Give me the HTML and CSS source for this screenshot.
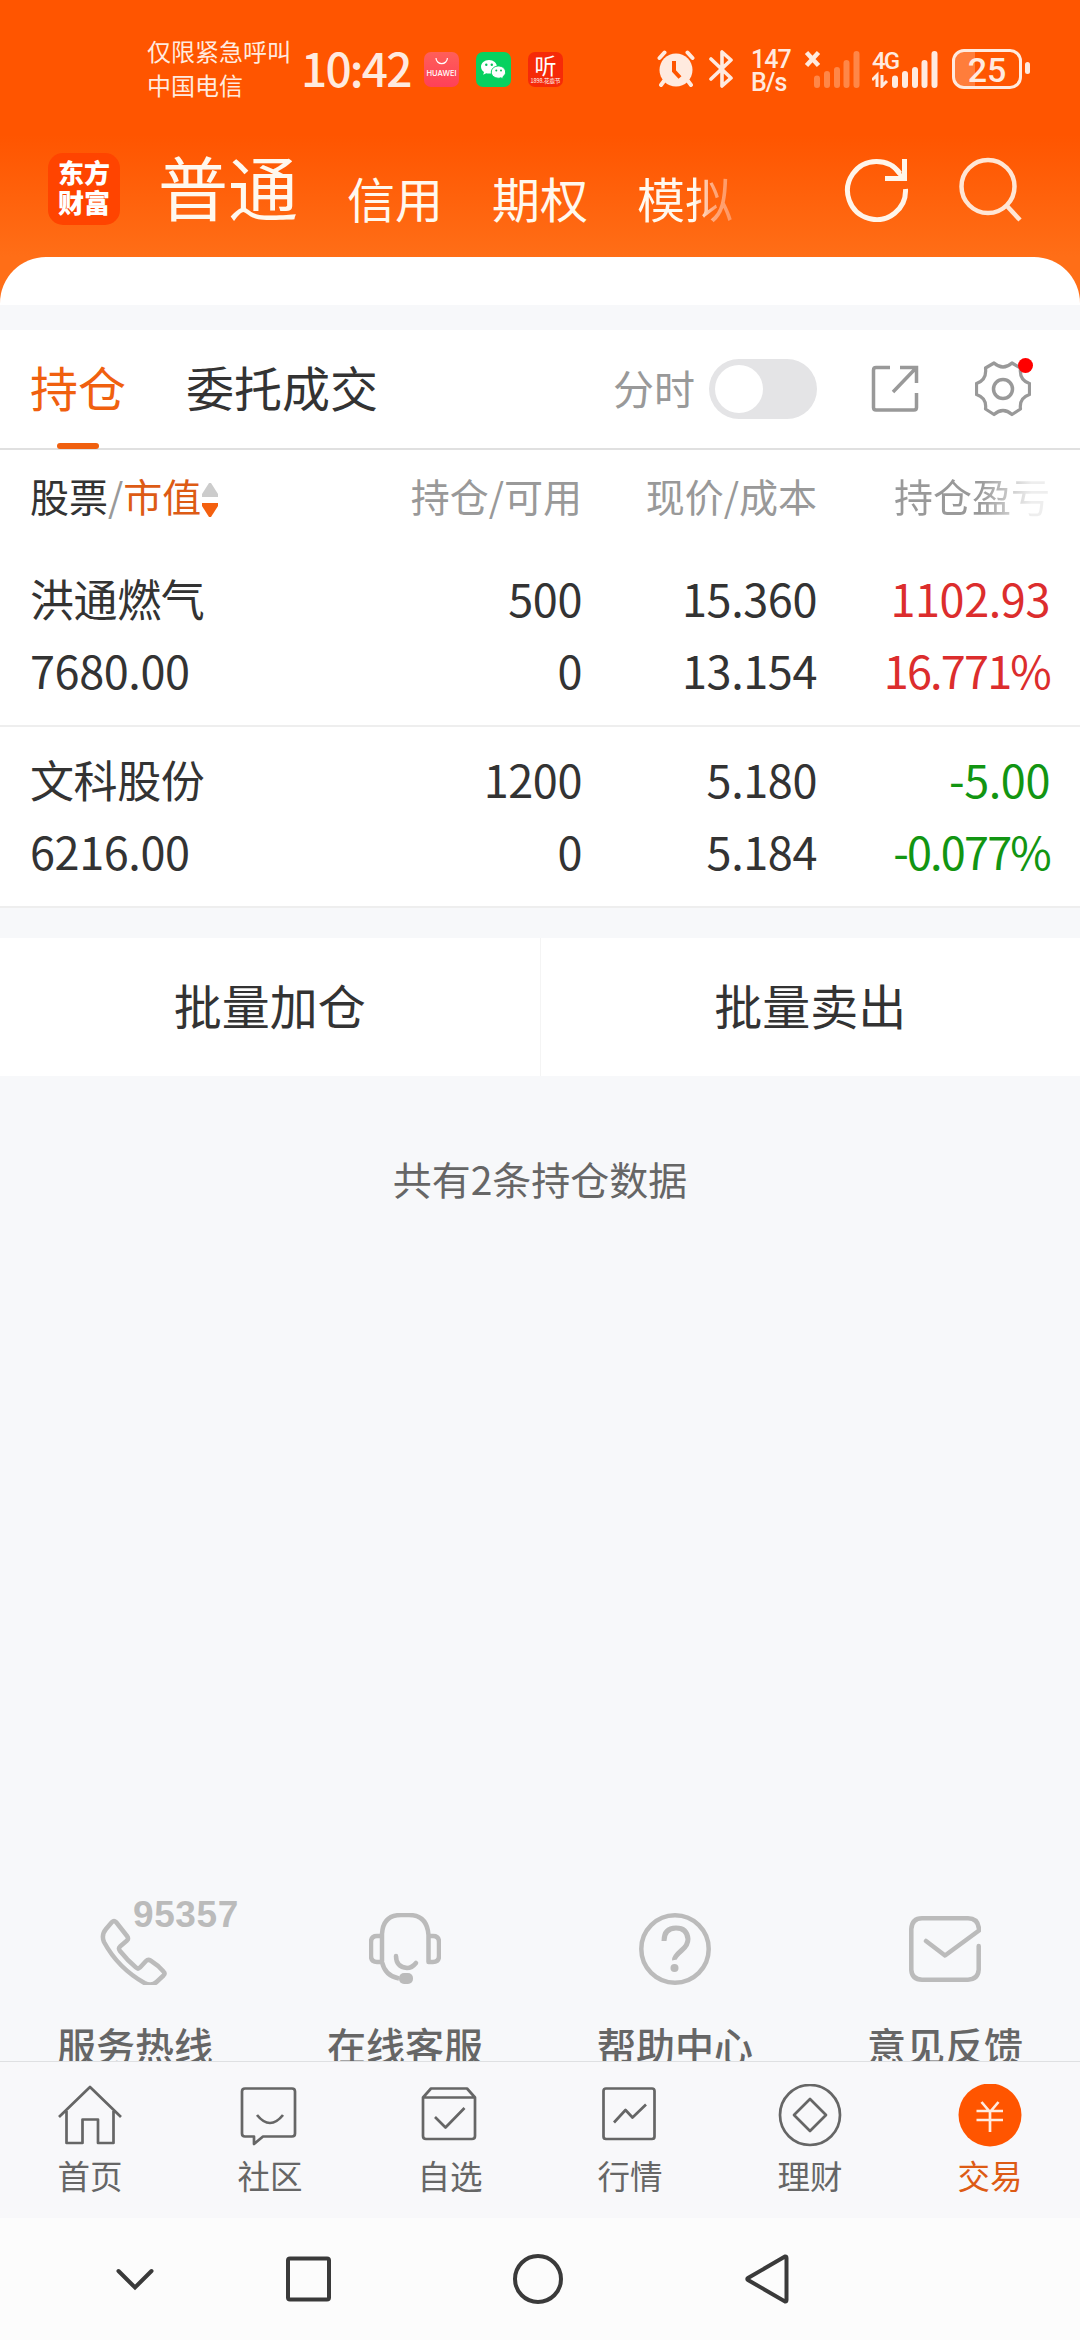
FILE: index.html
```
<!DOCTYPE html>
<html lang="zh-CN">

<head>
    <meta charset="UTF-8">
    <title>交易 - 持仓</title>
    <link rel="stylesheet" href="styles.css">
</head>

<body>
    <div class="header">
        <div class="status">
            <div class="carrier">
                <div>仅限紧急呼叫</div>
                <div>中国电信</div>
            </div>
            <div class="time">10:42</div>
            <div class="app huawei">
                <svg width="35" height="17" viewBox="0 0 35 17"><path d="M12 6a5.700 5.700 0 0 0 11.400 0" fill="none" stroke="#fff" stroke-width="1.200"/></svg>
                <span>HUAWEI</span>
            </div>
            <div class="app wechat">
                <svg width="35" height="35" viewBox="0 0 35 35">
                    <path d="M13 8c-4.600 0-8 3-8 6.800 0 2.200 1.200 4 3 5.300l-.8 2.600 3-1.500c.9.300 1.800.4 2.800.4 4.400 0 8-3 8-6.800S17.500 8 13 8z" fill="#fff"/>
                    <path d="M22.500 14c-4 0-7.200 2.700-7.200 6.100s3.200 6.100 7.200 6.100c.8 0 1.600-.1 2.400-.4l2.600 1.400-.7-2.300c1.700-1.100 2.800-2.800 2.800-4.800 0-3.400-3.200-6.100-7.100-6.100z" fill="#fff" stroke="#07d160" stroke-width="1"/>
                    <g fill="#07c15a"><circle cx="10.300" cy="12.800" r="1.200"/><circle cx="15.800" cy="12.800" r="1.200"/><circle cx="20.300" cy="18.500" r="1"/><circle cx="25" cy="18.500" r="1"/></g>
                </svg>
            </div>
            <div class="app radio"><b>听</b><span>1898.花鹿节</span></div>
            <svg class="alarm" width="38" height="38" viewBox="0 0 38 38">
                <circle cx="19" cy="20" r="16.500" fill="#ffeadf"/>
                <path d="M2.500 8l5-5.500M35.500 8l-5-5.500M7 31l-3 4M31 31l3 4" stroke="#ffeadf" stroke-width="4" stroke-linecap="round"/>
                <path d="M17 11v10l6 6.500" fill="none" stroke="#ff5500" stroke-width="4"/>
            </svg>
            <svg class="bt" width="24" height="38" viewBox="0 0 24 38"><path d="M2 9l20 19-9 8V22M2 29L22 10l-9-8v14" fill="none" stroke="#ffeadf" stroke-width="3.600" stroke-linejoin="round" stroke-linecap="round"/></svg>
            <div class="speed">
                <div>147</div>
                <div>B/s</div>
            </div>
            <svg class="signal" width="56" height="38" viewBox="0 0 56 38">
                <path d="M2.500 2.500l12 13M14.500 2.500l-12 13" stroke="#ffeadf" stroke-width="4.500"/>
                <path d="M13 28.500v6.500M23 24v11M33 20v15M42.500 13v22M52.500 4v31" stroke="#ff8748" stroke-width="6" stroke-linecap="round"/>
            </svg>
            <div class="mobile">
                <span>4G</span>
                <svg width="68" height="38" viewBox="0 0 68 38">
                    <path d="M0 30l5-5v12M10 25v11l5-5" fill="none" stroke="#ffeadf" stroke-width="3"/>
                    <path d="M23 28.500v6.500M33 24v11M43 20v15M52.500 13v22M62.500 4v31" stroke="#ffeadf" stroke-width="6" stroke-linecap="round"/>
                </svg>
            </div>
            <div class="battery">25</div>
            <div class="battery-cap"></div>
        </div>

        <div class="nav">
            <div class="logo">东方<br>财富</div>
            <div class="accounts">
                <span class="current">普通</span>
                <span>信用</span>
                <span>期权</span>
                <span class="fade">模拟</span>
            </div>
            <svg class="refresh" width="66" height="66" viewBox="0 0 66 66" fill="none" stroke="#fff5ea" stroke-width="5">
                <path d="M61.500 33A29 29 0 1 1 56 17.500"/>
                <path d="M60.500 3v19.500H41"/>
                <path d="M58 21L48 9" stroke-width="4"/>
            </svg>
            <svg class="search" width="66" height="66" viewBox="0 0 66 66" fill="none" stroke="#ffe6d5" stroke-width="4.500">
                <circle cx="31" cy="30.500" r="26.500"/>
                <path d="M50 50l13 14"/>
            </svg>
        </div>
    </div>
    <div class="sheet-top"><div></div></div>

    <div class="tabs">
        <div class="tab active">持仓</div>
        <div class="tab">委托成交</div>
        <span class="label">分时</span>
        <div class="switch"></div>
        <svg class="export" width="48" height="48" viewBox="0 0 48 48" fill="none" stroke="#999" stroke-width="3.500">
            <path d="M19 2.500H5Q2.500 2.500 2.500 5v37.500Q2.500 45 5 45h38q2.500 0 2.500-2.500V28"/>
            <path d="M29 2.500h16.500V18M45 3L22 27"/>
        </svg>
        <div class="gear">
            <svg width="56" height="56" viewBox="0 0 56 56" fill="none" stroke="#999" stroke-width="3.200">
                <path d="M19 2Q28 10 37 2L45.500 7Q44 19 54.500 22.500V33.500Q44 37 45.500 48L37 53.500Q28 45.500 19 53.500L10.500 48Q12 37 1.500 33.500V22.500Q12 19 10.500 7Z" stroke-linejoin="round"/>
                <circle cx="28" cy="28" r="9.500" stroke-width="3.500"/>
            </svg>
            <i></i>
        </div>
    </div>

    <div class="grid head">
        <div class="first">股票<span>/</span><em>市值</em>
            <svg width="16" height="36" viewBox="0 0 16 36"><path d="M7 1h2l7 11v3H0v-3z" fill="#ccc"/><path d="M0 21h16v3L9 35H7L0 24z" fill="#f4600f"/></svg>
        </div>
        <div>持仓/可用</div>
        <div>现价/成本</div>
        <div class="fade">持仓盈亏</div>
    </div>
    <div class="grid stock">
        <div class="name">洪通燃气</div>
        <div>500</div>
        <div>15.360</div>
        <div class="up">1102.93</div>
        <div>7680.00</div>
        <div>0</div>
        <div>13.154</div>
        <div class="up percent">16.771%</div>
    </div>
    <div class="grid stock">
        <div class="name">文科股份</div>
        <div>1200</div>
        <div>5.180</div>
        <div class="down">-5.00</div>
        <div>6216.00</div>
        <div>0</div>
        <div>5.184</div>
        <div class="down percent">-0.077%</div>
    </div>

    <div class="batch">
        <div>批量加仓</div>
        <div>批量卖出</div>
    </div>

    <div class="total">共有2条持仓数据</div>

    <div class="services">
        <div>
            <svg width="72" height="72" viewBox="0 0 72 72" fill="none" stroke="#bbb" stroke-width="4.500" stroke-linejoin="round">
                <path d="M13 9q2-2 4 0l11 14q2 2.500 0 4.500l-7 6q-2 2 0 4.500 8 10 16 16.500 2 2 4 0l6-6.500q2-2 4.500-.5 8 5 13 11 2 2 0 4l-7 6.500q-5 4.500-12 1Q19 55 5 29 2 22 7 16z"/>
            </svg>
            <span class="hotline">95357</span>
            <p>服务热线</p>
        </div>
        <div>
            <svg width="72" height="72" viewBox="0 0 72 72" fill="none" stroke="#bbb" stroke-width="4.500" stroke-linejoin="round">
                <path d="M13 48V21Q14 2 32 2h8Q58 2 59.500 22v27H64q6 0 6-6V29q0-6-6-6h-4.500M13 23H8q-6 0-6 6v14q0 6 6 6h5q3 14 17 16.500"/>
                <path d="M27 43q0 11 11 12 5 0 9-5" stroke-linecap="round"/>
                <rect x="30" y="60" width="14" height="11" rx="5" fill="#bbb" stroke="none"/>
            </svg>
            <p>在线客服</p>
        </div>
        <div>
            <svg width="72" height="72" viewBox="0 0 72 72" fill="none" stroke="#bbb" stroke-width="4.500">
                <circle cx="36" cy="36" r="33.700"/>
                <path d="M25 28q0-13 12-13 11 0 12 11 0 6-6 11-8 7-7.500 10" stroke-width="5"/>
                <circle cx="35.500" cy="55" r="4" fill="#bbb" stroke="none"/>
            </svg>
            <p>帮助中心</p>
        </div>
        <div>
            <svg width="72" height="72" viewBox="0 0 72 72" fill="none" stroke="#bbb" stroke-width="4.500" stroke-linejoin="round" stroke-linecap="round">
                <path d="M17 28l19 14.500L70 17.500V16Q69 5.300 59 5.300H13Q3 5.300 2.300 16v41Q3 66.500 13 66.700h46q10-.2 10.700-10V33"/>
            </svg>
            <p>意见反馈</p>
        </div>
    </div>

    <div class="tabbar">
        <div>
            <svg width="66" height="66" viewBox="0 0 66 66"><path d="M2 33L33 3l31 30M9.500 27v32h16V35.500H41V59h15.500V27"/></svg>
            <p>首页</p>
        </div>
        <div>
            <svg width="66" height="66" viewBox="0 0 66 66"><path d="M8 4.500h47q3 0 3 3v42q0 3-3 3H26l-9 7.500v-7.500H8q-3 0-3-3v-42q0-3 3-3zM20 31q13 16 26 0"/></svg>
            <p>社区</p>
        </div>
        <div>
            <svg width="66" height="66" viewBox="0 0 66 66"><path d="M6 13.500V52q0 3 3 3h46q3 0 3-3V13.500L50 4.500H14zM6 13.500h52M18 33l10.500 10.500L47.500 24"/></svg>
            <p>自选</p>
        </div>
        <div>
            <svg width="66" height="66" viewBox="0 0 66 66"><path d="M9 4.500h46q2.500 0 2.500 2.500v45.500q0 2.500-2.500 2.500H9q-2.500 0-2.500-2.500V7q0-2.500 2.500-2.500zM17 38.500l11.500-12.500 7 7.500L49 20.500"/></svg>
            <p>行情</p>
        </div>
        <div>
            <svg width="66" height="66" viewBox="0 0 66 66"><circle cx="33" cy="31" r="30"/><path d="M33 15l16 16-16 16-16-16z"/></svg>
            <p>理财</p>
        </div>
        <div class="active">
            <svg width="66" height="66" viewBox="0 0 66 66"><circle cx="33" cy="31" r="31.500" fill="#ff5500" stroke="none"/><path d="M24.500 18l8.500 10 8.500-10M33 28v20M19.500 27h26.500M19.500 36h26.500" stroke="#ffeadf"/></svg>
            <p>交易</p>
        </div>
    </div>

    <div class="sysnav">
        <svg width="60" height="60" viewBox="0 0 60 60"><path d="M13.500 22L30 38.500 46.500 22" stroke-linecap="round"/></svg>
        <svg width="60" height="60" viewBox="0 0 60 60"><rect x="10" y="9.500" width="41" height="41" rx="2"/></svg>
        <svg width="60" height="60" viewBox="0 0 60 60"><circle cx="30" cy="30" r="23"/></svg>
        <svg width="60" height="60" viewBox="0 0 60 60"><path d="M47 7.500L10 29q-1.500 1 0 2L47 52.500q1.500.5 1.500-1.500V9q0-2-1.500-1.500z"/></svg>
    </div>
</body>

</html>
```
FILE: styles.css
```
* {
    box-sizing: border-box;
}

body {
    margin: 0;
    width: 1080px;
    height: 2340px;
    overflow: hidden;
    display: flex;
    flex-direction: column;
    background-color: #f7f8fa;
    color: #333;
    font-family: "Noto Sans CJK SC", sans-serif;
}

p {
    margin: 0;
}

svg {
    display: block;
    flex: none;
}

.header {
    height: 257px;
    background: linear-gradient(#ff5500 135px, #ff6e17);
    color: #fff8ee;
}

/* status bar */
.status {
    height: 135px;
    padding: 34px 0 0 147px;
    display: flex;
    align-items: flex-start;
    color: #ffeadf;
}

.carrier {
    width: 154px;
    font-size: 24px;
    line-height: 34px;
}

.time {
    width: 123px;
    font-size: 46px;
    font-weight: 500;
    line-height: 66px;
    letter-spacing: -1.800px;
}

.app {
    width: 35px;
    height: 35px;
    margin: 18px 17px 0 0;
    border-radius: 7px;
    color: #fff;
    text-align: center;
}

.app span,
.app b {
    display: block;
    white-space: nowrap;
}

.huawei {
    background: linear-gradient(#ff5f59, #ff4058);
}

.huawei span {
    font: 500 7.500px/10px Inter, sans-serif;
}

.wechat {
    background-color: #07d160;
}

.radio {
    background-color: #f62a08;
    margin-right: 94px;
}

.radio b {
    font-size: 22px;
    line-height: 25px;
    font-weight: 400;
}

.radio span {
    font-size: 5.500px;
    line-height: 8px;
}

.alarm {
    margin: 16px 14px 0 0;
}

.bt {
    margin: 16px 18px 0 0;
}

.speed {
    width: 53px;
    margin-top: 14px;
    font: 500 25px/23px Roboto, sans-serif;
    letter-spacing: -1px;
}

.signal {
    margin: 16px 12px 0 0;
}

.mobile {
    width: 80px;
    height: 38px;
    margin-top: 16px;
    font: 500 24px/22px Roboto, sans-serif;
}

.mobile svg {
    margin-top: -22px;
}

.mobile span {
    display: block;
    letter-spacing: -2px;
}

.battery {
    width: 70px;
    height: 40px;
    margin-top: 15px;
    border: 3px solid #ffeadf;
    border-radius: 12px;
    background: linear-gradient(90deg, #ff7d3b 20px, transparent 20px);
    text-align: center;
    font: 500 34px/36px Roboto, sans-serif;
}

.battery-cap {
    width: 5px;
    height: 12px;
    margin: 28px 0 0 3px;
    border-radius: 3px;
    background-color: #ffeadf;
}

/* account switcher */
.nav {
    display: flex;
    align-items: flex-start;
    padding: 18px 0 0 48px;
}

.logo {
    width: 72px;
    height: 72px;
    padding-top: 4px;
    border-radius: 15px;
    background-color: #ff4400;
    color: #fff;
    text-align: center;
    font-size: 26px;
    font-weight: 900;
    line-height: 30px;
}

.accounts {
    display: flex;
    align-items: flex-start;
    width: 685px;
    height: 90px;
    margin: -15px 0 0 38px;
    font-size: 48px;
    line-height: 118px;
}

.accounts span {
    margin-right: 49px;
}

.accounts .current {
    font-size: 70px;
    line-height: 96px;
}

.accounts .fade {
    background: linear-gradient(90deg, #fff8ee 60%, #ffa77a 80%, #ff9560);
    -webkit-background-clip: text;
    color: transparent;
}

.refresh {
    margin: 3px 47px 0 1px;
}

.search {
    margin-top: 3px;
}

.sheet-top {
    height: 73px;
    background: linear-gradient(#ff6e17, #ff6e17) 0 0 / 100% 48px no-repeat;
    background-color: #f7f8fa;
}

.sheet-top div {
    height: 48px;
    border-radius: 46px 46px 0 0;
    background-color: #fff;
}

/* positions */
.tabs {
    height: 120px;
    padding-left: 30px;
    display: flex;
    align-items: center;
    background-color: #fff;
    border-bottom: 2px solid #e0e0e0;
}

.tab {
    width: 96px;
    height: 118px;
    margin-right: 60px;
    font-size: 48px;
    line-height: 113px;
    white-space: nowrap;
}

.tab.active {
    color: #f0600f;
}

.tab.active::after {
    content: "";
    display: block;
    width: 42px;
    height: 6px;
    margin: 0 auto;
    border-radius: 3px;
    background-color: #f0600f;
}

.label {
    margin: -5px 0 0 271px;
    font-size: 41px;
    color: #999;
}

.switch {
    width: 108px;
    height: 60px;
    margin-left: 14px;
    border-radius: 30px;
    padding: 6px;
    background-color: #e4e4e6;
}

.switch::before {
    content: "";
    display: block;
    width: 48px;
    height: 48px;
    border-radius: 50%;
    background-color: #fff;
}

.export {
    margin-left: 54px;
}

.gear {
    position: relative;
    margin-left: 56px;
}

.gear i {
    position: absolute;
    top: -3px;
    right: -2px;
    width: 15px;
    height: 15px;
    border-radius: 50%;
    background-color: #f00;
}

.grid {
    display: grid;
    grid-template-columns: 282px 270px 235px 233px;
    padding: 0 30px;
    background-color: #fff;
    text-align: right;
}

.head {
    height: 96px;
    font-size: 39px;
    line-height: 91px;
    color: #999;
}

.head .first {
    display: flex;
    align-items: flex-start;
    color: #333;
}

.head span {
    color: #999;
}

.head em {
    font-style: normal;
    color: #dd5b14;
}

.head svg {
    margin: 32px 0 0 1px;
}

.head .fade {
    background: linear-gradient(90deg, #999 70%, #eee 92%);
    -webkit-background-clip: text;
    color: transparent;
}

.stock {
    height: 181px;
    padding-top: 16px;
    grid-auto-rows: 72px;
    border-bottom: 2px solid #eee;
    font-size: 45px;
    line-height: 72px;
    letter-spacing: -.4px;
}

.stock div:nth-child(4n+1) {
    text-align: left;
}

.stock .name {
    font-size: 44px;
}

.stock .percent {
    letter-spacing: -1.800px;
}

.up {
    color: #dc2d2d;
}

.down {
    color: #129512;
}

.batch {
    display: flex;
    height: 138px;
    margin-top: 30px;
    background-color: #fff;
}

.batch div {
    flex: 1;
    text-align: center;
    font-size: 48px;
    line-height: 132px;
}

.batch div + div {
    border-left: 1px solid #f4f4f4;
}

.total {
    margin-top: 72px;
    text-align: center;
    font-size: 39px;
    line-height: 60px;
    color: #666;
}

/* customer service, the labels run under the tab bar */
.services {
    display: grid;
    grid-template-columns: repeat(4, 1fr);
    height: 178px;
    padding-top: 30px;
    margin-top: auto;
    overflow: hidden;
}

.services div {
    position: relative;
    display: flex;
    flex-direction: column;
    align-items: center;
}

.services p {
    margin-top: 31px;
    font-size: 39px;
    line-height: 56px;
    font-weight: 500;
    color: #666;
}

.hotline {
    position: absolute;
    left: 133px;
    top: -17px;
    font: bold 37px/37px "Liberation Sans", sans-serif;
    letter-spacing: .6px;
    color: #bbb;
}

.tabbar {
    display: grid;
    grid-template-columns: repeat(6, 1fr);
    height: 157px;
    padding-top: 22px;
    background-color: #f8f8fa;
    border-top: 1px solid #dfe0e2;
}

.tabbar div {
    display: flex;
    flex-direction: column;
    align-items: center;
}

.tabbar svg {
    fill: none;
    stroke: #666;
    stroke-width: 2.700;
    stroke-linejoin: round;
}

.tabbar p {
    margin-top: 1px;
    font-size: 32.500px;
    line-height: 48px;
    color: #666;
}

.tabbar .active p {
    color: #dd5b14;
}

.sysnav {
    display: flex;
    height: 122px;
    padding: 31px 0 0 105px;
    background-color: #fcfcfc;
}

.sysnav svg {
    fill: none;
    stroke: #3a3a3a;
    stroke-width: 4;
    margin-right: 170px;
}

.sysnav svg:first-child {
    margin-right: 113px;
}
```
